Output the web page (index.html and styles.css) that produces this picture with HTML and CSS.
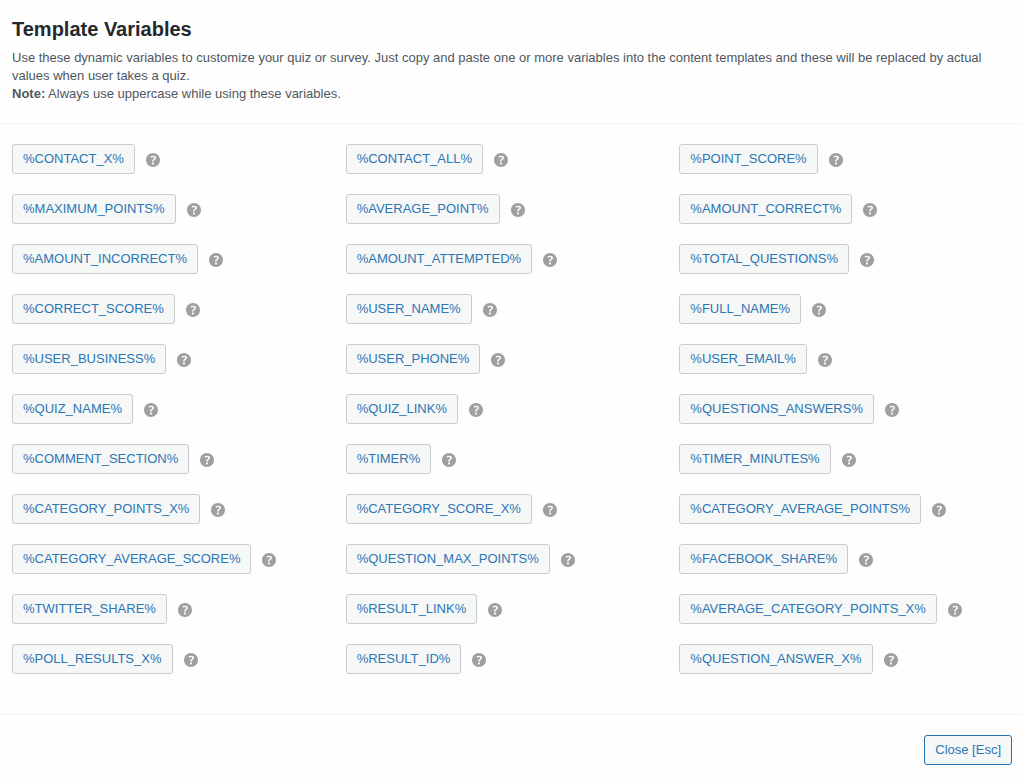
FILE: index.html
```html
<!DOCTYPE html>
<html lang="en">
  <head>
    <title>Template Variables</title>
    <meta charset="utf-8" />
    <link rel="stylesheet" href="styles.css">
  </head>
  <body>
    <svg class="sprite" aria-hidden="true">
      <symbol id="help" viewBox="0 0 20 20">
        <path d="M17 10c0-3.87-3.14-7-7-7-3.87 0-7 3.13-7 7s3.13 7 7 7c3.86 0 7-3.13 7-7zm-6.3 1.48H9.14v-.43c0-.38.08-.7.24-.98s.46-.57.88-.89c.41-.29.68-.53.81-.71.14-.18.2-.39.2-.62 0-.25-.09-.44-.28-.58-.19-.13-.45-.19-.79-.19-.58 0-1.25.19-2 .57l-.64-1.28c.87-.49 1.8-.74 2.77-.74.81 0 1.45.2 1.92.58.48.39.71.91.71 1.55 0 .43-.09.8-.29 1.11-.19.32-.57.67-1.11 1.06-.38.28-.61.49-.71.63-.1.15-.15.34-.15.57v.35zm-1.47 2.74c-.18-.17-.27-.42-.27-.73 0-.33.08-.58.26-.75s.43-.25.77-.25c.32 0 .57.09.75.26s.27.42.27.74c0 .3-.09.55-.27.72-.18.18-.43.27-.75.27-.33 0-.58-.09-.76-.26z" />
      </symbol>
    </svg>

    <header class="popup-header">
      <h2>Template Variables</h2>
      <p>
        Use these dynamic variables to customize your quiz or survey. Just copy
        and paste one or more variables into the content templates and these
        will be replaced by actual values when user takes a quiz.<br />
        <strong>Note:</strong> Always use uppercase while using these variables.
      </p>
    </header>

    <main class="variables">
      <div class="variable"><button class="button">%CONTACT_X%</button><svg class="help"><use href="#help" /></svg></div>
      <div class="variable"><button class="button">%CONTACT_ALL%</button><svg class="help"><use href="#help" /></svg></div>
      <div class="variable"><button class="button">%POINT_SCORE%</button><svg class="help"><use href="#help" /></svg></div>
      <div class="variable"><button class="button">%MAXIMUM_POINTS%</button><svg class="help"><use href="#help" /></svg></div>
      <div class="variable"><button class="button">%AVERAGE_POINT%</button><svg class="help"><use href="#help" /></svg></div>
      <div class="variable"><button class="button">%AMOUNT_CORRECT%</button><svg class="help"><use href="#help" /></svg></div>
      <div class="variable"><button class="button">%AMOUNT_INCORRECT%</button><svg class="help"><use href="#help" /></svg></div>
      <div class="variable"><button class="button">%AMOUNT_ATTEMPTED%</button><svg class="help"><use href="#help" /></svg></div>
      <div class="variable"><button class="button">%TOTAL_QUESTIONS%</button><svg class="help"><use href="#help" /></svg></div>
      <div class="variable"><button class="button">%CORRECT_SCORE%</button><svg class="help"><use href="#help" /></svg></div>
      <div class="variable"><button class="button">%USER_NAME%</button><svg class="help"><use href="#help" /></svg></div>
      <div class="variable"><button class="button">%FULL_NAME%</button><svg class="help"><use href="#help" /></svg></div>
      <div class="variable"><button class="button">%USER_BUSINESS%</button><svg class="help"><use href="#help" /></svg></div>
      <div class="variable"><button class="button">%USER_PHONE%</button><svg class="help"><use href="#help" /></svg></div>
      <div class="variable"><button class="button">%USER_EMAIL%</button><svg class="help"><use href="#help" /></svg></div>
      <div class="variable"><button class="button">%QUIZ_NAME%</button><svg class="help"><use href="#help" /></svg></div>
      <div class="variable"><button class="button">%QUIZ_LINK%</button><svg class="help"><use href="#help" /></svg></div>
      <div class="variable"><button class="button">%QUESTIONS_ANSWERS%</button><svg class="help"><use href="#help" /></svg></div>
      <div class="variable"><button class="button">%COMMENT_SECTION%</button><svg class="help"><use href="#help" /></svg></div>
      <div class="variable"><button class="button">%TIMER%</button><svg class="help"><use href="#help" /></svg></div>
      <div class="variable"><button class="button">%TIMER_MINUTES%</button><svg class="help"><use href="#help" /></svg></div>
      <div class="variable"><button class="button">%CATEGORY_POINTS_X%</button><svg class="help"><use href="#help" /></svg></div>
      <div class="variable"><button class="button">%CATEGORY_SCORE_X%</button><svg class="help"><use href="#help" /></svg></div>
      <div class="variable"><button class="button">%CATEGORY_AVERAGE_POINTS%</button><svg class="help"><use href="#help" /></svg></div>
      <div class="variable"><button class="button">%CATEGORY_AVERAGE_SCORE%</button><svg class="help"><use href="#help" /></svg></div>
      <div class="variable"><button class="button">%QUESTION_MAX_POINTS%</button><svg class="help"><use href="#help" /></svg></div>
      <div class="variable"><button class="button">%FACEBOOK_SHARE%</button><svg class="help"><use href="#help" /></svg></div>
      <div class="variable"><button class="button">%TWITTER_SHARE%</button><svg class="help"><use href="#help" /></svg></div>
      <div class="variable"><button class="button">%RESULT_LINK%</button><svg class="help"><use href="#help" /></svg></div>
      <div class="variable"><button class="button">%AVERAGE_CATEGORY_POINTS_X%</button><svg class="help"><use href="#help" /></svg></div>
      <div class="variable"><button class="button">%POLL_RESULTS_X%</button><svg class="help"><use href="#help" /></svg></div>
      <div class="variable"><button class="button">%RESULT_ID%</button><svg class="help"><use href="#help" /></svg></div>
      <div class="variable"><button class="button">%QUESTION_ANSWER_X%</button><svg class="help"><use href="#help" /></svg></div>
    </main>

    <footer class="popup-footer">
      <button class="button button-close">Close [Esc]</button>
    </footer>
  </body>
</html>
```

FILE: styles.css
```css
body {
  margin: 0;
  background: #fefefe;
  color: #50575e;
  font: 13px/18px "Liberation Sans", Arial, sans-serif;
}

.sprite {
  display: none;
}

.popup-header {
  padding: 16px 12px 20px;
  border-bottom: 1px solid #f3f3f4;
}

h2 {
  margin: 0 0 7px;
  color: #23282d;
  font-size: 20px;
  line-height: 26px;
}

p {
  margin: 0;
}

.variables {
  display: grid;
  grid-template-columns: repeat(3, 1fr);
  gap: 20px 0;
  padding: 20px 10px 40px 12px;
}

.variable {
  display: flex;
  align-items: center;
  gap: 8px;
}

.button {
  height: 30px;
  padding: 0 10px 1px;
  border: 1px solid #c9cbce;
  border-radius: 3px;
  background: #f6f7f7;
  color: #2b76b4;
  font: inherit;
  white-space: nowrap;
  cursor: pointer;
}

.help {
  width: 20px;
  height: 20px;
  margin-top: 2px;
  fill: #a0a0a0;
}

.popup-footer {
  display: flex;
  justify-content: flex-end;
  padding: 20px 11px 14px;
  border-top: 1px solid #f3f3f4;
}

.button-close {
  border-color: #2271b1;
}
```
